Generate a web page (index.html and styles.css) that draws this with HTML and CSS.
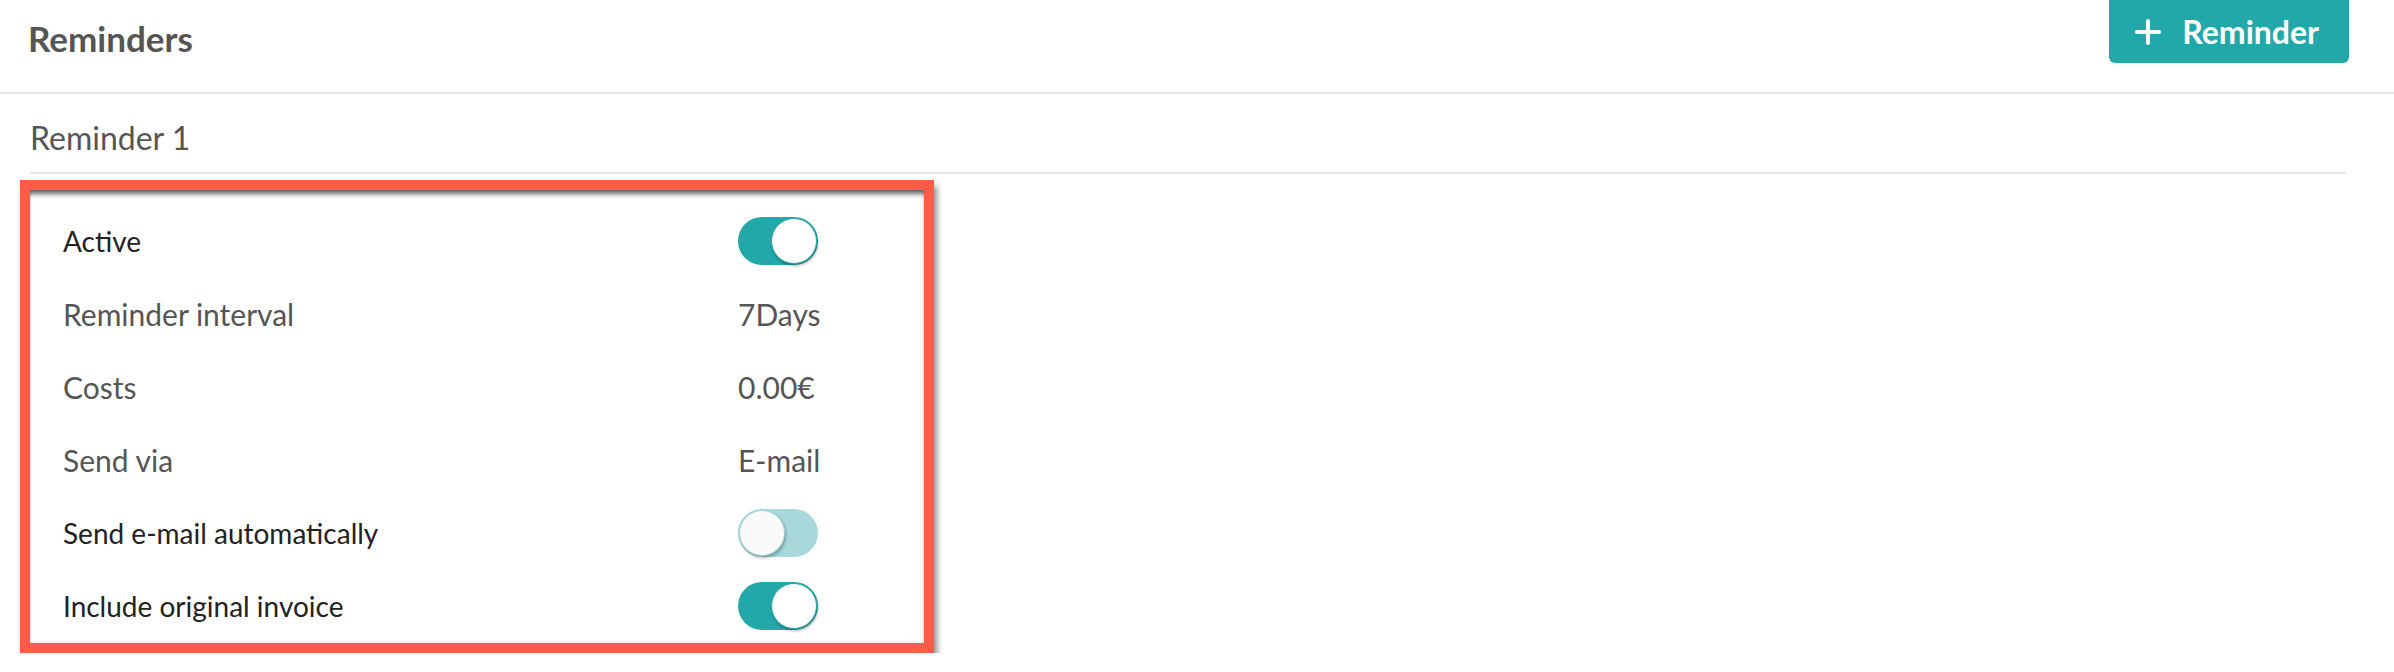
FILE: index.html
```html
<!DOCTYPE html>
<html lang="en">
	<head>
		<meta charset="UTF-8" />
		<title>Reminders</title>
		<link rel="stylesheet" href="styles.css">
	</head>
	<body>
		<div class="page-header">
			<h1>Reminders</h1>
			<button class="add-button">
				<svg class="plus-icon" viewBox="0 0 26 26" fill="none" stroke="currentColor" stroke-width="4" stroke-linecap="round">
					<path d="M13 2v22M2 13h22" />
				</svg>
				<span>Reminder</span>
			</button>
		</div>
		<div class="reminder">
			<h2>Reminder 1</h2>
			<div class="highlight">
				<div class="settings">
					<div class="row">
						<span class="label editable">Active</span>
						<label class="switch">
							<input type="checkbox" checked />
							<span class="slider"></span>
						</label>
					</div>
					<div class="row">
						<span class="label">Reminder interval</span>
						<span class="value">7Days</span>
					</div>
					<div class="row">
						<span class="label">Costs</span>
						<span class="value">0.00€</span>
					</div>
					<div class="row">
						<span class="label">Send via</span>
						<span class="value">E-mail</span>
					</div>
					<div class="row">
						<span class="label editable">Send e-mail automatically</span>
						<label class="switch">
							<input type="checkbox" />
							<span class="slider"></span>
						</label>
					</div>
					<div class="row">
						<span class="label editable">Include original invoice</span>
						<label class="switch">
							<input type="checkbox" checked />
							<span class="slider"></span>
						</label>
					</div>
				</div>
			</div>
		</div>
	</body>
</html>
```

FILE: styles.css
```css
:root {
	--teal: #23a8aa;
	--teal-light: #a8d8da;
	--text-grey: #555555;
	--text-dark: #222222;
	--line: #e6e6e6;
	--red: #ff5a4b;
}
body {
	margin: 0;
	font-family: 'Lato', 'Open Sans', sans-serif;
	background-color: #fff;
	color: var(--text-grey);
}
.page-header {
	display: flex;
	justify-content: space-between;
	align-items: flex-start;
	height: 92px;
	padding: 0 45px 0 28px;
	border-bottom: 2px solid var(--line);
}
h1 {
	margin: 0;
	padding-top: 18px;
	font-size: 35px;
	font-weight: 700;
	line-height: 40px;
	color: var(--text-grey);
}
.add-button {
	display: flex;
	align-items: center;
	gap: 21px;
	height: 63px;
	padding: 0 30px 0 26px;
	background-color: var(--teal);
	color: #fff;
	border: none;
	border-radius: 0 0 6px 6px;
	font-family: inherit;
	font-size: 32px;
	font-weight: 700;
	cursor: pointer;
}
.plus-icon {
	width: 26px;
	height: 26px;
}
.reminder {
	padding: 0 48px 0 20px;
}
h2 {
	margin: 0 0 0 10px;
	padding-top: 26px;
	height: 52px;
	font-size: 32px;
	font-weight: 400;
	line-height: 36px;
	color: var(--text-grey);
	border-bottom: 2px solid var(--line);
}
.highlight {
	width: 894px;
	margin-top: 6px;
	border: 10px solid var(--red);
	box-shadow: 3px 6px 6px rgba(0, 0, 0, 0.45);
}
.settings {
	padding: 14px 0 1px 33px;
	box-shadow: inset 0 7px 5px -3px rgba(0, 0, 0, 0.6), inset 0 0 3px rgba(0, 0, 0, 0.2);
}
.row {
	display: grid;
	grid-template-columns: 675px auto;
	align-items: center;
	height: 73px;
}
.label {
	font-size: 30px;
}
.label.editable {
	font-size: 28px;
	color: var(--text-dark);
}
.value {
	font-size: 30px;
	color: var(--text-grey);
}
.switch {
	position: relative;
	display: inline-block;
	width: 80px;
	height: 48px;
}
.switch input {
	opacity: 0;
	width: 0;
	height: 0;
}
.slider {
	position: absolute;
	inset: 0;
	background-color: var(--teal-light);
	border-radius: 24px;
	cursor: pointer;
}
.slider:before {
	position: absolute;
	content: '';
	top: 1px;
	left: 1px;
	width: 44px;
	height: 44px;
	background-color: #fafafa;
	border: 1px solid rgba(35, 168, 170, 0.4);
	border-radius: 50%;
	box-shadow: 1px 2px 3px rgba(0, 0, 0, 0.3);
}
input:checked + .slider {
	background-color: var(--teal);
}
input:checked + .slider:before {
	left: 33px;
	background-color: #fff;
	border-color: var(--teal);
}
```
